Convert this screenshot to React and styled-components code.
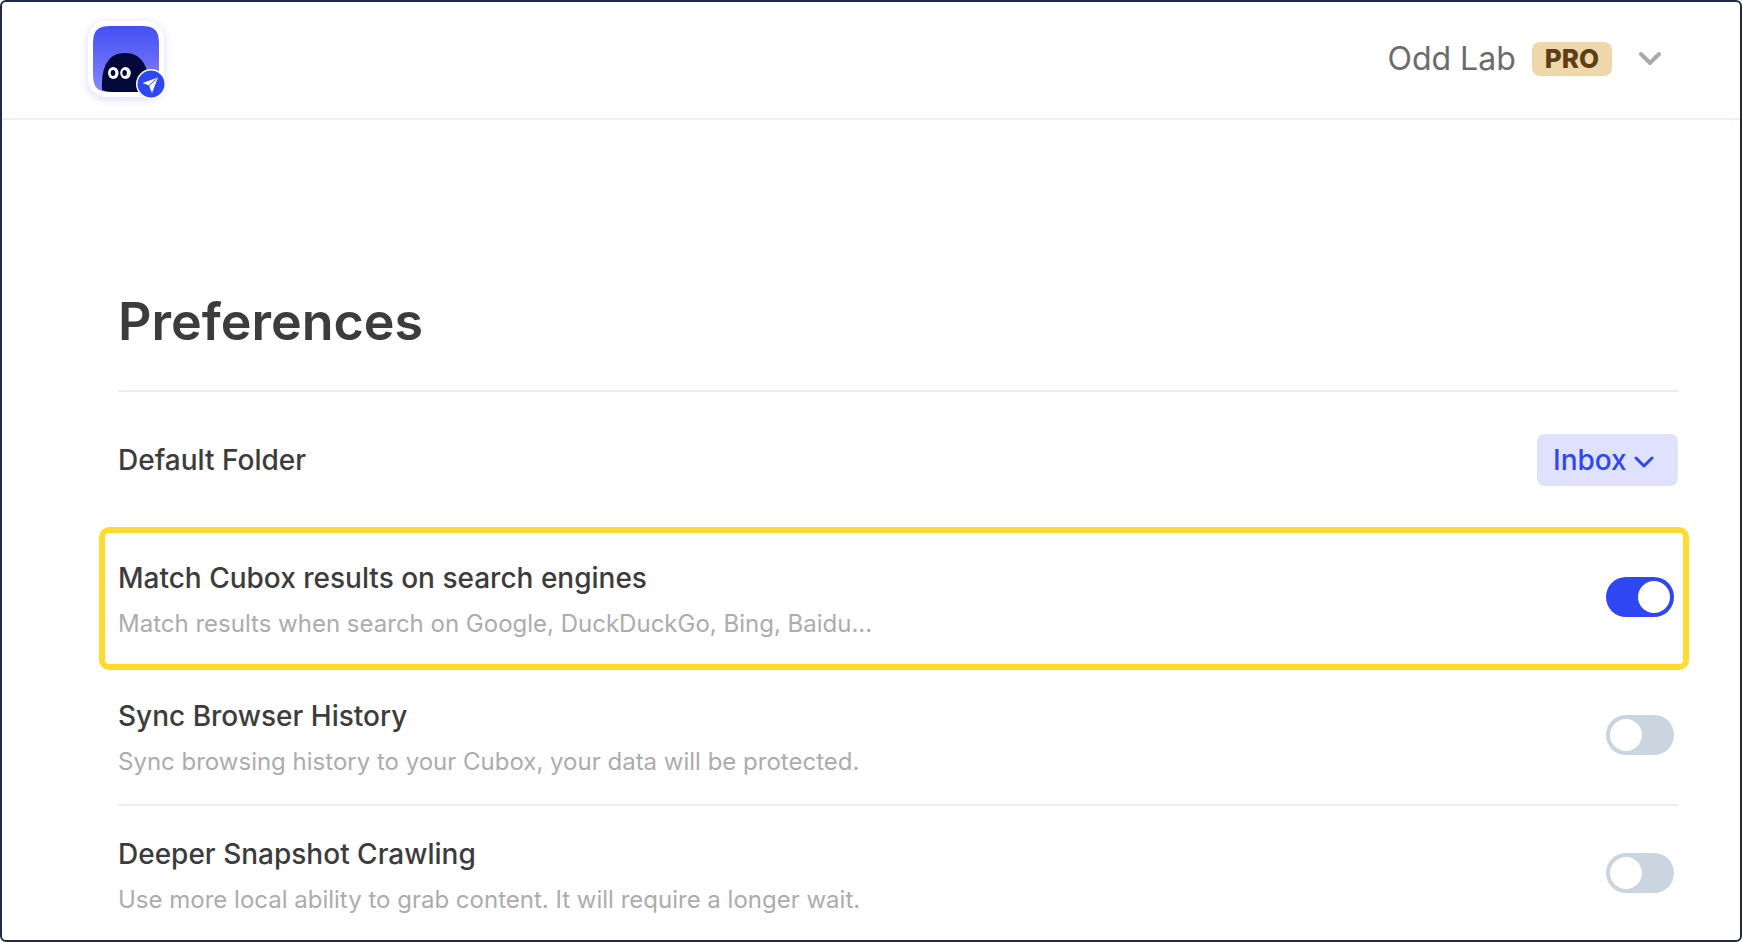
import React, { useState } from "react";
import styled, { createGlobalStyle } from "styled-components";

const GlobalStyle = createGlobalStyle`
  * {
    box-sizing: border-box;
  }
  body {
    margin: 0;
    background: #fff;
    font-family: Inter, "Liberation Sans", sans-serif;
    color: #3c3c3c;
  }
  button,
  select {
    font-family: inherit;
  }
`;

const Frame = styled.div`
  min-height: 100vh;
  border: 2px solid #1f2a44;
  border-radius: 6px;
  background: #fff;
`;
const Header = styled.header`
  display: flex;
  justify-content: space-between;
  align-items: center;
  height: 118px;
  padding: 0 78px 2px 86px;
  border-bottom: 2px solid #efeff1;
`;
const LogoLink = styled.a`
  display: block;
  width: 76px;
  height: 76px;
  border-radius: 18px;
  background: #fff;
  box-shadow: 0 2px 10px rgba(60, 70, 240, 0.2);
`;
const LogoSvg = styled.svg`
  display: block;
  overflow: visible;
`;
const Account = styled.button`
  display: flex;
  align-items: center;
  padding: 0;
  border: none;
  background: none;
  font-size: 32px;
  line-height: 40px;
  color: #6b6b6b;
  cursor: pointer;
`;
const Plan = styled.span`
  margin: 0 26px 0 16px;
  padding: 0 13px;
  border-radius: 8px;
  background: #eed7aa;
  color: #5c3e17;
  font-size: 26px;
  font-weight: 800;
  line-height: 34px;
`;
const Main = styled.main`
  padding: 170px 62px 0 116px;
`;
const Title = styled.h1`
  margin: 0;
  padding-bottom: 36px;
  border-bottom: 2px solid #ebeff5;
  font-size: 52px;
  font-weight: 600;
  line-height: 64px;
`;
const Row = styled.div`
  position: relative;
  display: flex;
  justify-content: space-between;
  align-items: center;
  min-height: 138px;
  padding: 28px 0 26px;
  border-bottom: 2px solid #ebeff5;
  &:first-child {
    padding: 27px 0;
  }
  &:last-child {
    min-height: 0;
    padding-bottom: 24px;
    border-bottom: none;
  }
  ${(props) =>
    props.$marked &&
    `
    &::after {
      content: "";
      position: absolute;
      inset: -3px -11px -4px -19px;
      border: 6px solid #ffdb2d;
      border-radius: 10px;
      pointer-events: none;
    }
  `}
`;
const RowText = styled.div`
  display: flex;
  flex-direction: column;
  gap: 10px;
`;
const RowLabel = styled.label`
  font-size: 28px;
  font-weight: 500;
  line-height: 40px;
`;
const RowNote = styled.div`
  font-size: 24px;
  line-height: 32px;
  color: #acacac;
`;
const FolderBox = styled.div`
  display: grid;
  align-items: center;
  border-radius: 8px;
  background: #dfe2fe;
  color: #2f46f3;
  > * {
    grid-area: 1 / 1;
  }
`;
const FolderSelect = styled.select`
  height: 52px;
  padding: 0 51px 0 16px;
  border: none;
  border-radius: 8px;
  background: none;
  appearance: none;
  color: inherit;
  font-size: 28px;
  font-weight: 500;
`;
const Chevron = styled.svg`
  display: block;
  fill: none;
  stroke: currentColor;
  stroke-linecap: round;
  stroke-linejoin: round;
`;
const AccountChevron = styled(Chevron)`
  color: #a9a9a9;
`;
const FolderChevron = styled(Chevron)`
  justify-self: end;
  margin: 4px 24px 0 0;
  pointer-events: none;
`;
const Switch = styled.input`
  flex: none;
  display: flex;
  width: 68px;
  height: 40px;
  margin: 0 4px 4px 16px;
  padding: 4px;
  border-radius: 20px;
  background: #cbd5e0;
  appearance: none;
  cursor: pointer;
  &::before {
    content: "";
    width: 32px;
    height: 32px;
    border-radius: 50%;
    background: #fff;
  }
  &:checked {
    justify-content: flex-end;
    background: #2f46f3;
  }
`;

const Logo = () => (
  <LogoSvg width="76" height="76" viewBox="0 0 76 76" aria-hidden="true">
    <defs>
      <linearGradient id="sky" x1="0" y1="0" x2="0" y2="1">
        <stop offset="0" stopColor="#4350f5" />
        <stop offset="0.5" stopColor="#6569f6" />
        <stop offset="1" stopColor="#8a8bf8" />
      </linearGradient>
    </defs>
    <path
      d="M38 5H52C67 5 71 9 71 24V52C71 67 67 71 52 71H24C9 71 5 67 5 52V24C5 9 9 5 24 5Z"
      fill="url(#sky)"
    />
    <path
      d="M14 69C13 44 21 32 37 32C53 32 61 44 62 70C58 71 54 71 50 71H24C20 71 17 70 14 69Z"
      fill="#03073a"
    />
    <ellipse cx="25.3" cy="52" rx="5.3" ry="6" fill="#fff" />
    <ellipse cx="37.5" cy="52" rx="5.3" ry="6" fill="#fff" />
    <ellipse cx="25" cy="52" rx="2.3" ry="3" fill="#03073a" />
    <ellipse cx="36.6" cy="52" rx="2.3" ry="3" fill="#03073a" />
    <circle cx="63" cy="63" r="15" fill="#fff" />
    <circle cx="63" cy="63" r="13.5" fill="#2f46f3" />
    <path d="M70 56.5L54.5 62L61 64.5L64 72Z" fill="#fff" />
    <path d="M68.5 58L61 64.5" stroke="#2f46f3" strokeWidth="1" />
  </LogoSvg>
);

const SWITCHES = [
  {
    id: "match",
    label: "Match Cubox results on search engines",
    note: "Match results when search on Google, DuckDuckGo, Bing, Baidu...",
    marked: true,
  },
  {
    id: "history",
    label: "Sync Browser History",
    note: "Sync browsing history to your Cubox, your data will be protected.",
  },
  {
    id: "snapshot",
    label: "Deeper Snapshot Crawling",
    note: "Use more local ability to grab content. It will require a longer wait.",
  },
];

const App = () => {
  const [enabled, setEnabled] = useState({ match: true });

  const toggle = (id) => {
    setEnabled((prev) => ({ ...prev, [id]: !prev[id] }));
  };

  return (
    <>
      <GlobalStyle />
      <Frame>
        <Header>
          <LogoLink href="#" aria-label="Cubox">
            <Logo />
          </LogoLink>
          <Account type="button">
            Odd Lab
            <Plan>PRO</Plan>
            <AccountChevron
              width="24"
              height="16"
              viewBox="0 0 24 16"
              strokeWidth="4"
            >
              <path d="M3 3L12 12L21 3" />
            </AccountChevron>
          </Account>
        </Header>
        <Main>
          <Title>Preferences</Title>
          <div>
            <Row>
              <RowLabel htmlFor="folder">Default Folder</RowLabel>
              <FolderBox>
                <FolderSelect id="folder">
                  <option>Inbox</option>
                </FolderSelect>
                <FolderChevron
                  width="20"
                  height="12"
                  viewBox="0 0 20 12"
                  strokeWidth="3"
                >
                  <path d="M2 2L10 10L18 2" />
                </FolderChevron>
              </FolderBox>
            </Row>
            {SWITCHES.map((item) => (
              <Row key={item.id} $marked={item.marked}>
                <RowText>
                  <RowLabel htmlFor={item.id}>{item.label}</RowLabel>
                  <RowNote>{item.note}</RowNote>
                </RowText>
                <Switch
                  type="checkbox"
                  role="switch"
                  id={item.id}
                  checked={!!enabled[item.id]}
                  onChange={() => toggle(item.id)}
                />
              </Row>
            ))}
          </div>
        </Main>
      </Frame>
    </>
  );
};

export default App;
